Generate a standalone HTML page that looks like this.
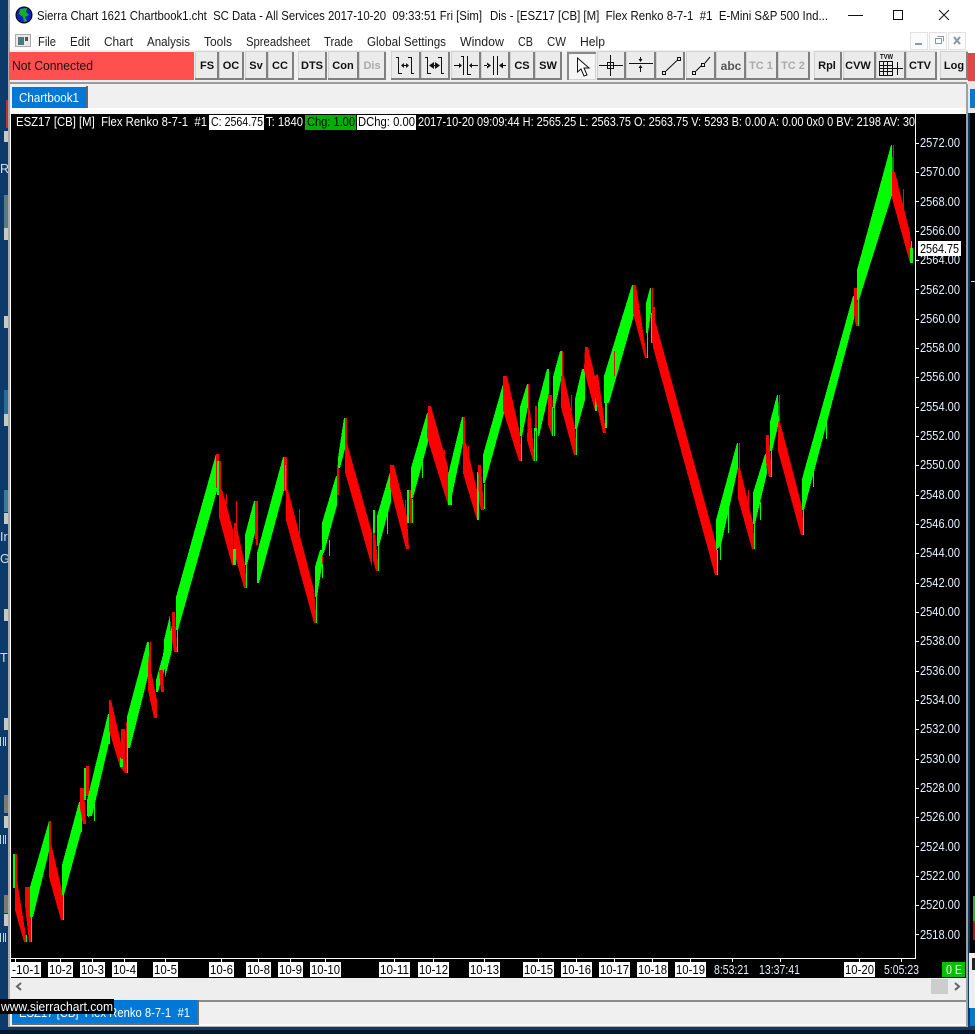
<!DOCTYPE html>
<html><head><meta charset="utf-8"><title>Sierra Chart</title>
<style>
html,body{margin:0;padding:0;background:#0c3a6b;width:975px;height:1034px;overflow:hidden}
svg{display:block;position:absolute;left:0;top:0}
text{font-family:"Liberation Sans",sans-serif;font-size:12.5px;white-space:pre}
.m{fill:#222}
.b{font-weight:bold;font-size:11px;fill:#111;text-anchor:middle}
.d{font-weight:bold;font-size:11px;fill:#aaa;text-anchor:middle}
.a{fill:#e6f0ff;font-size:13px}
.k{fill:#000;font-size:13px}
.w{fill:#fff;font-size:13px}
</style></head><body>
<svg width="975" height="1034" viewBox="0 0 975 1034" xmlns="http://www.w3.org/2000/svg">
<!-- desktop -->
<rect width="975" height="1034" fill="#0c3a6b"/>
<rect x="0" y="1030" width="975" height="4" fill="#06192c"/>
<g fill="#c8c8c8"><rect x="4" y="131" width="4" height="11"/><rect x="4" y="228" width="4" height="12"/><rect x="4" y="316" width="4" height="12"/><rect x="4" y="414" width="4" height="12"/><rect x="4" y="513" width="4" height="11"/><rect x="4" y="609" width="4" height="12"/><rect x="4" y="718" width="4" height="12"/><rect x="4" y="816" width="4" height="12"/><rect x="4" y="914" width="4" height="12"/></g>
<rect x="6" y="100" width="2" height="28" fill="#c03030"/>
<g fill="#5a7a80"><rect x="4" y="195" width="4" height="33"/></g>
<rect x="4" y="390" width="4" height="24" fill="#2a6a9a"/><rect x="4" y="490" width="4" height="22" fill="#3a7a9a"/>
<g fill="#7a7a7a"><rect x="4" y="795" width="4" height="18"/><rect x="4" y="895" width="4" height="18"/></g>
<text x="0" y="173" style="fill:#cfe0ea">R</text><text x="0" y="541" style="fill:#cfe0ea">Ir</text><text x="0" y="563" style="fill:#cfe0ea">Gr</text><text x="0" y="662" style="fill:#cfe0ea">Th</text>
<g fill="#b8dcdc"><rect x="0" y="737" width="1" height="9"/><rect x="3" y="737" width="1" height="9"/><rect x="5" y="737" width="1" height="9"/><rect x="0" y="835" width="1" height="9"/><rect x="3" y="835" width="1" height="9"/><rect x="5" y="835" width="1" height="9"/><rect x="0" y="933" width="1" height="9"/><rect x="3" y="933" width="1" height="9"/><rect x="5" y="933" width="1" height="9"/></g>
<!-- right strip -->
<rect x="967" y="0" width="8" height="53" fill="#fff"/>
<rect x="968" y="53" width="7" height="28" fill="#e04848"/>
<rect x="968" y="81" width="7" height="32" fill="#e8e8e8"/>
<rect x="970" y="89" width="5" height="19" fill="#0078d7"/>
<rect x="970" y="113" width="5" height="840" fill="#000"/>
<rect x="971" y="281" width="4" height="1" fill="#ddd"/>
<rect x="973" y="896" width="2" height="25" fill="#00d000"/><rect x="973" y="921" width="2" height="19" fill="#e00000"/>
<rect x="969" y="953" width="6" height="22" fill="#eee"/><rect x="972" y="958" width="3" height="12" fill="#222"/>
<rect x="969" y="975" width="6" height="33" fill="#eee"/><rect x="970" y="1008" width="5" height="18" fill="#0078d7"/>
<!-- window -->
<rect x="8" y="0" width="960" height="1027" fill="#f0f0f0"/>
<rect x="8" y="0" width="2" height="1027" fill="#a8a8a8"/>
<rect x="966" y="84" width="2" height="943" fill="#a0a0a0"/>
<rect x="10" y="0" width="958" height="50" fill="#fff"/>
<!-- globe -->
<circle cx="24" cy="15" r="8" fill="#1020c8" stroke="#000" stroke-width="1"/>
<path d="M20 9 L27 8 L26 12 L29 15 L25 17 L27 21 L24 22 L23 17 L19 14 Z" fill="#18b020"/>
<text x="37" y="20" textLength="445" lengthAdjust="spacingAndGlyphs" style="fill:#111">Sierra Chart 1621 Chartbook1.cht  SC Data - All Services 2017-10-20  09:33:51 Fri [Sim]</text>
<text x="490" y="20" textLength="338" lengthAdjust="spacingAndGlyphs" style="fill:#111">Dis - [ESZ17 [CB] [M]  Flex Renko 8-7-1  #1  E-Mini S&amp;P 500 Ind...</text>
<!-- window controls -->
<rect x="848" y="15" width="15" height="1" fill="#111"/>
<rect x="893.500" y="10.500" width="9" height="9" fill="none" stroke="#111"/>
<path d="M939 10 L949 20 M949 10 L939 20" stroke="#111" fill="none"/>
<!-- menu -->
<rect x="15.500" y="34.500" width="15" height="12" fill="#e8e8e8" stroke="#aaa"/><rect x="18" y="37" width="6" height="8" fill="#4a7a7a"/><rect x="25" y="37" width="3" height="4" fill="#555"/>
<text class="m" x="38" y="46" textLength="18" lengthAdjust="spacingAndGlyphs">File</text>
<text class="m" x="70" y="46" textLength="20" lengthAdjust="spacingAndGlyphs">Edit</text>
<text class="m" x="104" y="46" textLength="29" lengthAdjust="spacingAndGlyphs">Chart</text>
<text class="m" x="147" y="46" textLength="43" lengthAdjust="spacingAndGlyphs">Analysis</text>
<text class="m" x="204" y="46" textLength="28" lengthAdjust="spacingAndGlyphs">Tools</text>
<text class="m" x="246" y="46" textLength="64" lengthAdjust="spacingAndGlyphs">Spreadsheet</text>
<text class="m" x="324" y="46" textLength="29" lengthAdjust="spacingAndGlyphs">Trade</text>
<text class="m" x="367" y="46" textLength="79" lengthAdjust="spacingAndGlyphs">Global Settings</text>
<text class="m" x="460" y="46" textLength="44" lengthAdjust="spacingAndGlyphs">Window</text>
<text class="m" x="518" y="46" textLength="15" lengthAdjust="spacingAndGlyphs">CB</text>
<text class="m" x="547" y="46" textLength="19" lengthAdjust="spacingAndGlyphs">CW</text>
<text class="m" x="580" y="46" textLength="25" lengthAdjust="spacingAndGlyphs">Help</text>
<!-- mdi -->
<g fill="#fbfbfb" stroke="#e2e2e2"><rect x="910.500" y="32.500" width="17" height="17"/><rect x="929.500" y="32.500" width="17" height="17"/><rect x="948.500" y="32.500" width="17" height="17"/></g>
<rect x="915" y="43" width="7" height="2" fill="#8a97a5"/>
<path d="M935.500 38.500h6v5h-6z M937.500 36.500h6v5" fill="none" stroke="#8a97a5"/>
<path d="M954 37 L960 44 M960 37 L954 44" stroke="#8a97a5" stroke-width="2" fill="none"/>
<!-- toolbar -->
<rect x="10" y="51" width="957" height="31" fill="#f0f0f0"/>
<rect x="9" y="52" width="185" height="28" fill="#ff5050"/>
<text x="12" y="70" textLength="81" lengthAdjust="spacingAndGlyphs" style="fill:#1a1010">Not Connected</text>
<g fill="#ebebeb" stroke="#d2d2d2">
<rect x="195.500" y="51.500" width="23" height="28"/><rect x="219.500" y="51.500" width="24" height="28"/><rect x="245.500" y="51.500" width="22" height="28"/><rect x="268.500" y="51.500" width="25" height="28"/>
<rect x="298.500" y="51.500" width="28" height="28"/><rect x="328.500" y="51.500" width="30" height="28"/><rect x="359.500" y="51.500" width="26" height="28"/>
<rect x="391.500" y="51.500" width="29" height="28"/><rect x="421.500" y="51.500" width="28" height="28"/><rect x="451.500" y="51.500" width="29" height="28"/><rect x="481.500" y="51.500" width="28" height="28"/>
<rect x="510.500" y="51.500" width="24" height="28"/><rect x="535.500" y="51.500" width="26" height="28"/>
<rect x="567.500" y="51.500" width="28" height="28" fill="#f6f6f6"/>
<rect x="597.500" y="51.500" width="28" height="28"/><rect x="626.500" y="51.500" width="29" height="28"/><rect x="656.500" y="51.500" width="28" height="28"/><rect x="686.500" y="51.500" width="29" height="28"/><rect x="716.500" y="51.500" width="29" height="28"/>
<rect x="746.500" y="51.500" width="31" height="28"/><rect x="778.500" y="51.500" width="31" height="28"/>
<rect x="814.500" y="51.500" width="27" height="28"/><rect x="843.500" y="51.500" width="32" height="28"/><rect x="876.500" y="51.500" width="29" height="28"/><rect x="906.500" y="51.500" width="30" height="28"/><rect x="940.500" y="51.500" width="27" height="28"/>
</g>
<path fill="none" stroke="#808080" stroke-width="2" d="M218 52V79H195M243 52V79H219M267 52V79H245M293 52V79H268M326 52V79H298M358 52V79H328M385 52V79H359M420 52V79H391M449 52V79H421M480 52V79H451M509 52V79H481M534 52V79H510M561 52V79H535M625 52V79H597M655 52V79H626M684 52V79H656M715 52V79H686M745 52V79H716M777 52V79H746M809 52V79H778M841 52V79H814M875 52V79H843M905 52V79H876M936 52V79H906M967 52V79H940"/>
<path fill="none" stroke="#8a8a8a" stroke-width="2" d="M568 80V53H596"/>
<text class="b" x="207" y="69">FS</text><text class="b" x="231" y="69">OC</text><text class="b" x="256" y="69">Sv</text><text class="b" x="280" y="69">CC</text>
<text class="b" x="312" y="69">DTS</text><text class="b" x="343" y="69">Con</text><text class="d" x="372" y="69">Dis</text>
<text class="b" x="522" y="69">CS</text><text class="b" x="548" y="69">SW</text>
<text x="731" y="70" text-anchor="middle" style="font-size:12px;font-weight:bold;fill:#555">abc</text>
<text class="d" x="761" y="69">TC 1</text><text class="d" x="793" y="69">TC 2</text>
<text class="b" x="827" y="69">Rpl</text><text class="b" x="858" y="69">CVW</text><text class="b" x="920" y="69">CTV</text><text class="b" x="954" y="69">Log</text>
<!-- toolbar icons -->
<g fill="none" stroke="#111" shape-rendering="crispEdges">
<path d="M398.500 57V74M396 57.500H399M398 73.500H402M411.500 57V74M408 57.500H411M411 73.500H414"/>
<path d="M427.500 57V74M425 57.500H428M427 73.500H431M441.500 57V74M438 57.500H441M441 73.500H444"/>
<path d="M463.500 56V75M467.500 56V75M461 56.500H464M467 74.500H471M454 65.500H460M471 65.500H478"/>
<path d="M493.500 56V75M497.500 56V75"/>
<path d="M599 65.500H623M610.500 55V76"/><rect x="607.500" y="62.500" width="6" height="6"/>
<path d="M629 63.500H653M640.500 57V61M640.500 66V72"/>
<rect x="662.500" y="71.500" width="3" height="3"/><rect x="677.500" y="57.500" width="3" height="3"/>
<rect x="692.500" y="71.500" width="3" height="3"/><rect x="701.500" y="63.500" width="3" height="3"/>
<rect x="879.500" y="61.500" width="13" height="14"/>
<path d="M883.500 61V75M887.500 61V75M879 65.500H892M879 68.500H892M879 71.500H892M892 68.500H903M897.500 62V75"/>
</g>
<g stroke="#111" fill="none"><path d="M666 71 L677 60.500M696 71 L701 66M705 63 L710 57"/></g>
<g fill="#111"><path d="M401 65.500l3-2.500v5zM409 65.500l-3-2.500v5zM404 65h2v1h-2z"/><path d="M429 65.500l5-3.500v7zM440 65.500l-5-3.500v7zM434 65h1v1h-1z"/><path d="M462 65.500l-3-2.500v5zM469 65.500l3-2.500v5z"/><path d="M491 65.500l-4-3v6zM484 65h4v1h-4zM499 65.500l4-3v6zM503 65h3v1h-3z"/><path d="M640.500 62l-2-3h4zM640.500 65l-2 3h4z"/></g>
<path d="M577.500 58V72L581 69L584 76L587 75L584 68L589 68Z" fill="#fff" stroke="#111"/>
<text x="880" y="59" textLength="13" lengthAdjust="spacingAndGlyphs" style="font-size:7px;font-weight:bold;fill:#111">TVW</text>
<!-- tab strip -->
<rect x="10" y="82" width="957" height="2" fill="#9a9a9a"/>
<rect x="10" y="84" width="956" height="24" fill="#f0f0f0"/>
<rect x="10" y="108" width="956" height="2" fill="#fff"/>
<rect x="10" y="110" width="956" height="4" fill="#f8f8f8"/>
<rect x="12" y="87" width="75" height="21" fill="#0078d7"/>
<rect x="86" y="86" width="2" height="22" fill="#5a6a78"/>
<text x="19" y="102" textLength="60" lengthAdjust="spacingAndGlyphs" style="fill:#fff">Chartbook1</text>
<!-- chart -->
<rect x="10" y="113" width="1" height="865" fill="#fff"/>
<rect x="11" y="114" width="955" height="864" fill="#000"/>
<rect x="915" y="114" width="1" height="845" fill="#fff"/>
<rect x="11" y="958" width="905" height="1" fill="#fff"/>
<!-- header -->
<rect x="209" y="115" width="55" height="15" fill="#fff"/>
<rect x="305" y="115" width="51" height="15" fill="#00b000"/>
<rect x="357" y="115" width="59" height="15" fill="#fff"/>
<text x="16" y="126" textLength="191" lengthAdjust="spacingAndGlyphs" class="w">ESZ17 [CB] [M]  Flex Renko 8-7-1  #1</text>
<text x="211" y="126" textLength="52" lengthAdjust="spacingAndGlyphs" class="k">C: 2564.75</text>
<text x="266" y="126" textLength="37" lengthAdjust="spacingAndGlyphs" class="w">T: 1840</text>
<text x="307" y="126" textLength="48" lengthAdjust="spacingAndGlyphs" class="k">Chg: 1.00</text>
<text x="358" y="126" textLength="57" lengthAdjust="spacingAndGlyphs" class="k">DChg: 0.00</text>
<text x="418" y="126" textLength="497" lengthAdjust="spacingAndGlyphs" class="w">2017-10-20 09:09:44 H: 2565.25 L: 2563.75 O: 2563.75 V: 5293 B: 0.00 A: 0.00 0x0 0 BV: 2198 AV: 30</text>
<!-- series -->
<g shape-rendering="crispEdges">
<rect x="13" y="854" width="3" height="34" fill="#0f0"/>
<g fill="#f00"><rect x="15" y="854" width="2" height="30"/><polygon points="15,880 17,880 27,942 24,942 15,910"/><polygon points="25,887 30,887 32,942 29,942 25,905"/></g>
<rect x="26" y="935" width="1" height="7" fill="#0f0"/>
<polygon fill="#0f0" points="30,887 49,821 50,821 50,847 33,917 30,917"/><rect x="31" y="917" width="1" height="25" fill="#0f0"/>
<g fill="#f00"><rect x="49" y="821" width="2" height="25"/><polygon points="49,843 51,843 63,895 63,920 61,920 49,877"/></g>
<rect x="63" y="895" width="1" height="25" fill="#0f0"/>
<polygon fill="#0f0" points="62,865 79,802 81,802 81,832 64,895 62,895"/>
<rect x="80" y="802" width="2" height="30" fill="#0f0"/>
<polygon fill="#f00" points="80,788 84,788 86,824 83,824 80,808"/>
<rect x="84" y="768" width="2" height="32" fill="#0f0"/><rect x="86" y="766" width="3" height="30" fill="#f00"/>
<rect x="94" y="803" width="1" height="18" fill="#0f0"/><rect x="88" y="800" width="1" height="17" fill="#0f0"/>
<polygon fill="#0f0" points="87,800 108,714 109,714 109,743 92,816 88,816 87,816"/>
<rect x="108" y="714" width="2" height="30" fill="#0f0"/>
<polygon fill="#f00" points="109,700 111,700 128,773 125,773 120,767 109,730"/>
<rect x="120" y="758" width="3" height="9" fill="#0f0"/><rect x="121" y="729" width="4" height="30" fill="#f00"/>
<rect x="126" y="722" width="1" height="51" fill="#f00"/>
<polygon fill="#0f0" points="127,717 147,642 149,642 149,672 130,748 127,748"/><rect x="127" y="748" width="1" height="25" fill="#0f0"/>
<polygon fill="#f00" points="148,665 150,642 151,642 151,670 157,700 157,718 154,718 148,690"/>
<polygon fill="#0f0" points="156,680 163,655 165,640 165,668 158,692 156,692"/>
<polygon fill="#f00" points="159,670 163,670 164,692 161,692"/>
<polygon fill="#0f0" points="164,640 170,615 171,640 166,668 164,668"/>
<polygon fill="#0f0" points="165,660 172,625 172,650 165,678"/>
<polygon fill="#f00" points="172,612 175,612 177,652 174,652 172,640"/>
<rect x="177" y="630" width="1" height="22" fill="#0f0"/>
<polygon fill="#0f0" points="176,597 216,454 218,454 218,487 178,630 176,630"/>
<rect x="211" y="490" width="1" height="12" fill="#0f0"/>
<rect x="216" y="454" width="3" height="34" fill="#f00"/>
<rect x="217" y="461" width="2" height="34" fill="#0f0"/><rect x="219" y="461" width="2" height="26" fill="#f00"/>
<polygon fill="#f00" points="219,487 221,487 226,503 233,530 234,565 232,565 219,517"/>
<rect x="226" y="494" width="1" height="10" fill="#f00"/><rect x="236" y="501" width="1" height="30" fill="#f00"/>
<polygon fill="#f00" points="234,523 236,523 245,565 247,588 244,588 234,552"/>
<rect x="233" y="549" width="3" height="16" fill="#0f0"/>
<polygon fill="#0f0" points="245,535 254,501 255,501 255,533 247,565 245,565"/><rect x="246" y="565" width="1" height="23" fill="#0f0"/>
<rect x="255" y="501" width="3" height="38" fill="#f00"/><rect x="256" y="538" width="2" height="7" fill="#f00"/>
<polygon fill="#0f0" points="257,553 283,457 284,457 284,490 259,583 257,583"/>
<rect x="284" y="457" width="3" height="34" fill="#f00"/><rect x="285" y="465" width="1" height="25" fill="#0f0"/>
<rect x="280" y="490" width="1" height="12" fill="#0f0"/>
<polygon fill="#f00" points="286,490 288,490 314,590 317,623 314,623 286,520"/>
<rect x="299" y="509" width="1" height="25" fill="#f00"/>
<rect x="316" y="597" width="1" height="26" fill="#0f0"/>
<polygon fill="#0f0" points="315,567 320,550 322,550 322,566 317,597 315,597"/>
<rect x="322" y="550" width="1" height="28" fill="#0f0"/><rect x="322" y="555" width="1" height="9" fill="#f00"/>
<polygon fill="#0f0" points="322,523 336,476 337,476 337,505 324,553 322,553"/><rect x="329" y="540" width="1" height="16" fill="#0f0"/>
<rect x="337" y="465" width="2" height="30" fill="#f00"/>
<polygon fill="#0f0" points="338,458 344,418 346,418 346,445 340,468 338,468"/>
<rect x="345" y="418" width="2" height="28" fill="#f00"/>
<polygon fill="#f00" points="345,443 347,443 372,533 372,567 345,472"/>
<rect x="373" y="510" width="2" height="32" fill="#0f0"/>
<polygon fill="#f00" points="373,533 375,533 379,571 376,571 373,560"/><rect x="378" y="545" width="1" height="26" fill="#0f0"/>
<polygon fill="#0f0" points="377,516 390,472 391,472 391,502 379,546 377,546"/><rect x="387" y="513" width="1" height="21" fill="#0f0"/>
<polygon fill="#f00" points="390,465 394,465 407,517 409,549 406,549 390,487"/>
<rect x="405" y="500" width="1" height="16" fill="#f00"/>
<rect x="407" y="490" width="2" height="33" fill="#0f0"/><polygon fill="#f00" points="409,490 412,490 413,523 410,523"/><rect x="412" y="499" width="1" height="24" fill="#0f0"/>
<polygon fill="#0f0" points="411,468 427,413 428,413 428,442 413,498 411,498"/><rect x="422" y="462" width="1" height="16" fill="#0f0"/>
<polygon fill="#f00" points="428,406 431,406 448,467 450,505 448,505 427,437"/>
<rect x="444" y="450" width="1" height="17" fill="#f00"/>
<polygon fill="#0f0" points="448,475 462,417 463,417 463,443 450,505 448,505"/><rect x="450" y="490" width="2" height="15" fill="#0f0"/>
<rect x="463" y="417" width="2" height="30" fill="#f00"/>
<polygon fill="#f00" points="463,443 466,443 477,490 477,520 463,473"/><rect x="468" y="446" width="1" height="15" fill="#f00"/>
<rect x="477" y="472" width="2" height="48" fill="#0f0"/>
<polygon fill="#f00" points="478,465 481,465 484,510 481,510 479,500"/><rect x="484" y="484" width="1" height="25" fill="#0f0"/>
<polygon fill="#0f0" points="483,455 503,384 504,384 504,413 485,483 483,483"/>
<polygon fill="#f00" points="503,376 507,376 520,433 522,461 519,461 503,410"/>
<rect x="521" y="436" width="1" height="25" fill="#0f0"/>
<polygon fill="#0f0" points="520,407 527,384 528,384 528,407 522,436 520,436"/>
<rect x="528" y="384" width="1" height="26" fill="#f00"/>
<polygon fill="#f00" points="528,410 530,410 535,461 533,461 527,440"/>
<rect x="535" y="406" width="2" height="25" fill="#f00"/><rect x="534" y="428" width="3" height="33" fill="#0f0"/><rect x="535" y="431" width="1" height="30" fill="#000"/>
<polygon fill="#0f0" points="538,403 547,369 549,369 549,393 539,436 538,436"/>
<polygon fill="#f00" points="548,395 552,395 554,436 552,436 548,424"/><rect x="552" y="407" width="3" height="29" fill="#0f0"/><rect x="553" y="408" width="1" height="28" fill="#000"/>
<polygon fill="#0f0" points="553,377 560,351 562,351 562,376 555,407 553,407"/><rect x="562" y="351" width="1" height="26" fill="#f00"/>
<polygon fill="#f00" points="561,376 564,376 575,428 577,455 574,455 561,407"/><rect x="571" y="395" width="1" height="16" fill="#f00"/>
<rect x="576" y="428" width="1" height="27" fill="#0f0"/>
<polygon fill="#0f0" points="575,399 582,369 585,369 585,400 577,429 575,429"/>
<polygon fill="#f00" points="585,347 588,347 597,385 597,411 595,411 584,370"/>
<rect x="595" y="395" width="2" height="16" fill="#0f0"/>
<polygon fill="#f00" points="595,376 598,374 605,425 606,433 603,433 595,397"/>
<rect x="605" y="400" width="2" height="28" fill="#0f0"/>
<polygon fill="#0f0" points="604,376 632,285 634,285 634,315 609,403 604,403"/>
<rect x="614" y="351" width="1" height="25" fill="#f00"/><rect x="613" y="351" width="1" height="25" fill="#0f0"/>
<polygon fill="#f00" points="633,285 636,285 647,358 645,358 633,313"/><rect x="647" y="333" width="1" height="25" fill="#0f0"/>
<polygon fill="#0f0" points="646,303 650,288 651,288 651,313 648,333 646,333"/>
<rect x="652" y="288" width="1" height="55" fill="#f00"/><rect x="651" y="313" width="1" height="30" fill="#0f0"/>
<polygon fill="#f00" points="653,307 655,307 655,320 717,547 718,575 715,575 653,347"/>
<rect x="717" y="550" width="1" height="25" fill="#0f0"/>
<polygon fill="#0f0" points="716,520 737,443 738,443 738,468 721,545 716,550"/><rect x="720" y="545" width="1" height="15" fill="#0f0"/><rect x="728" y="510" width="1" height="23" fill="#0f0"/>
<rect x="739" y="443" width="1" height="26" fill="#f00"/>
<polygon fill="#f00" points="738,468 740,468 753,523 755,549 752,549 738,498"/><rect x="748" y="490" width="1" height="15" fill="#f00"/>
<rect x="754" y="524" width="1" height="25" fill="#0f0"/>
<polygon fill="#0f0" points="753,493 765,454 766,454 767,473 755,524 753,524"/><rect x="760" y="502" width="1" height="18" fill="#0f0"/>
<polygon fill="#f00" points="766,435 769,435 772,477 769,477 766,462"/><rect x="771" y="451" width="1" height="26" fill="#0f0"/>
<polygon fill="#0f0" points="770,422 777,395 778,395 779,422 772,451 770,451"/>
<rect x="779" y="395" width="1" height="27" fill="#f00"/>
<polygon fill="#f00" points="778,422 780,422 802,507 804,535 801,535 778,451"/>
<rect x="803" y="510" width="1" height="25" fill="#0f0"/>
<polygon fill="#0f0" points="802,479 853,296 854,296 854,319 804,510 802,510"/><rect x="826" y="423" width="1" height="16" fill="#0f0"/><rect x="813" y="472" width="1" height="15" fill="#0f0"/>
<polygon fill="#f00" points="854,288 857,288 859,326 856,326 854,315"/><rect x="858" y="300" width="1" height="26" fill="#0f0"/>
<polygon fill="#0f0" points="857,270 891,145 892,145 893,192 859,300 857,300"/>
<rect x="893" y="145" width="1" height="27" fill="#f00"/>
<polygon fill="#f00" points="892,172 895,172 910,233 912,263 910,263 892,198"/><rect x="903" y="189" width="1" height="20" fill="#f00"/>
<rect x="910" y="248" width="3" height="15" fill="#0f0"/><rect x="911" y="241" width="1" height="8" fill="#0f0"/>
</g>
<!-- price ticks -->
<g fill="#fff"><rect x="915" y="143" width="4" height="1"/><rect x="915" y="172" width="4" height="1"/><rect x="915" y="201" width="4" height="1"/><rect x="915" y="231" width="4" height="1"/><rect x="915" y="260" width="4" height="1"/><rect x="915" y="289" width="4" height="1"/><rect x="915" y="319" width="4" height="1"/><rect x="915" y="348" width="4" height="1"/><rect x="915" y="377" width="4" height="1"/><rect x="915" y="407" width="4" height="1"/><rect x="915" y="436" width="4" height="1"/><rect x="915" y="465" width="4" height="1"/><rect x="915" y="495" width="4" height="1"/><rect x="915" y="524" width="4" height="1"/><rect x="915" y="553" width="4" height="1"/><rect x="915" y="583" width="4" height="1"/><rect x="915" y="612" width="4" height="1"/><rect x="915" y="641" width="4" height="1"/><rect x="915" y="671" width="4" height="1"/><rect x="915" y="700" width="4" height="1"/><rect x="915" y="729" width="4" height="1"/><rect x="915" y="759" width="4" height="1"/><rect x="915" y="788" width="4" height="1"/><rect x="915" y="817" width="4" height="1"/><rect x="915" y="846" width="4" height="1"/><rect x="915" y="876" width="4" height="1"/><rect x="915" y="905" width="4" height="1"/><rect x="915" y="934" width="4" height="1"/></g>
<g>
<text class="a" x="920" y="147" textLength="40" lengthAdjust="spacingAndGlyphs">2572.00</text>
<text class="a" x="920" y="176" textLength="40" lengthAdjust="spacingAndGlyphs">2570.00</text>
<text class="a" x="920" y="206" textLength="40" lengthAdjust="spacingAndGlyphs">2568.00</text>
<text class="a" x="920" y="235" textLength="40" lengthAdjust="spacingAndGlyphs">2566.00</text>
<text class="a" x="920" y="264" textLength="40" lengthAdjust="spacingAndGlyphs">2564.00</text>
<text class="a" x="920" y="294" textLength="40" lengthAdjust="spacingAndGlyphs">2562.00</text>
<text class="a" x="920" y="323" textLength="40" lengthAdjust="spacingAndGlyphs">2560.00</text>
<text class="a" x="920" y="352" textLength="40" lengthAdjust="spacingAndGlyphs">2558.00</text>
<text class="a" x="920" y="381" textLength="40" lengthAdjust="spacingAndGlyphs">2556.00</text>
<text class="a" x="920" y="411" textLength="40" lengthAdjust="spacingAndGlyphs">2554.00</text>
<text class="a" x="920" y="440" textLength="40" lengthAdjust="spacingAndGlyphs">2552.00</text>
<text class="a" x="920" y="469" textLength="40" lengthAdjust="spacingAndGlyphs">2550.00</text>
<text class="a" x="920" y="499" textLength="40" lengthAdjust="spacingAndGlyphs">2548.00</text>
<text class="a" x="920" y="528" textLength="40" lengthAdjust="spacingAndGlyphs">2546.00</text>
<text class="a" x="920" y="557" textLength="40" lengthAdjust="spacingAndGlyphs">2544.00</text>
<text class="a" x="920" y="587" textLength="40" lengthAdjust="spacingAndGlyphs">2542.00</text>
<text class="a" x="920" y="616" textLength="40" lengthAdjust="spacingAndGlyphs">2540.00</text>
<text class="a" x="920" y="645" textLength="40" lengthAdjust="spacingAndGlyphs">2538.00</text>
<text class="a" x="920" y="675" textLength="40" lengthAdjust="spacingAndGlyphs">2536.00</text>
<text class="a" x="920" y="704" textLength="40" lengthAdjust="spacingAndGlyphs">2534.00</text>
<text class="a" x="920" y="733" textLength="40" lengthAdjust="spacingAndGlyphs">2532.00</text>
<text class="a" x="920" y="763" textLength="40" lengthAdjust="spacingAndGlyphs">2530.00</text>
<text class="a" x="920" y="792" textLength="40" lengthAdjust="spacingAndGlyphs">2528.00</text>
<text class="a" x="920" y="821" textLength="40" lengthAdjust="spacingAndGlyphs">2526.00</text>
<text class="a" x="920" y="851" textLength="40" lengthAdjust="spacingAndGlyphs">2524.00</text>
<text class="a" x="920" y="880" textLength="40" lengthAdjust="spacingAndGlyphs">2522.00</text>
<text class="a" x="920" y="909" textLength="40" lengthAdjust="spacingAndGlyphs">2520.00</text>
<text class="a" x="920" y="939" textLength="40" lengthAdjust="spacingAndGlyphs">2518.00</text>
</g>
<rect x="918" y="241" width="43" height="15" fill="#fff"/>
<text class="k" x="920" y="253" textLength="39" lengthAdjust="spacingAndGlyphs">2564.75</text>
<!-- time ticks -->
<g fill="#fff"><rect x="15" y="958" width="1" height="4"/><rect x="60" y="958" width="1" height="4"/><rect x="92" y="958" width="1" height="4"/><rect x="124" y="958" width="1" height="4"/><rect x="165" y="958" width="1" height="4"/><rect x="221" y="958" width="1" height="4"/><rect x="258" y="958" width="1" height="4"/><rect x="290" y="958" width="1" height="4"/><rect x="325" y="958" width="1" height="4"/><rect x="394" y="958" width="1" height="4"/><rect x="433" y="958" width="1" height="4"/><rect x="484" y="958" width="1" height="4"/><rect x="538" y="958" width="1" height="4"/><rect x="576" y="958" width="1" height="4"/><rect x="614" y="958" width="1" height="4"/><rect x="652" y="958" width="1" height="4"/><rect x="690" y="958" width="1" height="4"/><rect x="732" y="958" width="1" height="4"/><rect x="780" y="958" width="1" height="4"/><rect x="859" y="958" width="1" height="4"/><rect x="901" y="958" width="1" height="4"/>
<rect x="11" y="962" width="30" height="15"/><rect x="48" y="962" width="25" height="15"/><rect x="80" y="962" width="25" height="15"/><rect x="112" y="962" width="25" height="15"/><rect x="153" y="962" width="25" height="15"/><rect x="209" y="962" width="25" height="15"/><rect x="246" y="962" width="25" height="15"/><rect x="278" y="962" width="25" height="15"/><rect x="310" y="962" width="31" height="15"/><rect x="379" y="962" width="31" height="15"/><rect x="418" y="962" width="31" height="15"/><rect x="469" y="962" width="31" height="15"/><rect x="523" y="962" width="31" height="15"/><rect x="561" y="962" width="31" height="15"/><rect x="599" y="962" width="31" height="15"/><rect x="637" y="962" width="31" height="15"/><rect x="675" y="962" width="31" height="15"/><rect x="844" y="962" width="31" height="15"/></g>
<g>
<text class="k" x="12" y="974" textLength="28" lengthAdjust="spacingAndGlyphs">-10-1</text>
<text class="k" x="49" y="974" textLength="23" lengthAdjust="spacingAndGlyphs">10-2</text>
<text class="k" x="81" y="974" textLength="23" lengthAdjust="spacingAndGlyphs">10-3</text>
<text class="k" x="113" y="974" textLength="23" lengthAdjust="spacingAndGlyphs">10-4</text>
<text class="k" x="154" y="974" textLength="23" lengthAdjust="spacingAndGlyphs">10-5</text>
<text class="k" x="210" y="974" textLength="23" lengthAdjust="spacingAndGlyphs">10-6</text>
<text class="k" x="247" y="974" textLength="23" lengthAdjust="spacingAndGlyphs">10-8</text>
<text class="k" x="279" y="974" textLength="23" lengthAdjust="spacingAndGlyphs">10-9</text>
<text class="k" x="311" y="974" textLength="29" lengthAdjust="spacingAndGlyphs">10-10</text>
<text class="k" x="380" y="974" textLength="29" lengthAdjust="spacingAndGlyphs">10-11</text>
<text class="k" x="419" y="974" textLength="29" lengthAdjust="spacingAndGlyphs">10-12</text>
<text class="k" x="470" y="974" textLength="29" lengthAdjust="spacingAndGlyphs">10-13</text>
<text class="k" x="524" y="974" textLength="29" lengthAdjust="spacingAndGlyphs">10-15</text>
<text class="k" x="562" y="974" textLength="29" lengthAdjust="spacingAndGlyphs">10-16</text>
<text class="k" x="600" y="974" textLength="29" lengthAdjust="spacingAndGlyphs">10-17</text>
<text class="k" x="638" y="974" textLength="29" lengthAdjust="spacingAndGlyphs">10-18</text>
<text class="k" x="676" y="974" textLength="29" lengthAdjust="spacingAndGlyphs">10-19</text>
<text class="a" x="714" y="974" textLength="35" lengthAdjust="spacingAndGlyphs">8:53:21</text>
<text class="a" x="759" y="974" textLength="41" lengthAdjust="spacingAndGlyphs">13:37:41</text>
<text class="k" x="845" y="974" textLength="29" lengthAdjust="spacingAndGlyphs">10-20</text>
<text class="a" x="884" y="974" textLength="35" lengthAdjust="spacingAndGlyphs">5:05:23</text>
</g>
<rect x="942" y="962" width="23" height="15" fill="#00c000"/>
<text class="w" x="946" y="974" textLength="16" lengthAdjust="spacingAndGlyphs">0 E</text>
<!-- scrollbar -->
<rect x="11" y="978" width="955" height="22" fill="#eeeeee"/>
<path d="M21 983 L17 986.500 L21 990" fill="none" stroke="#666" stroke-width="2"/>
<rect x="931" y="979" width="17" height="15" fill="#cdcdcd"/>
<path d="M955 983 L959 986.500 L955 990" fill="none" stroke="#666" stroke-width="2"/>
<rect x="11" y="1000" width="955" height="2" fill="#8a8a8a"/>
<rect x="11" y="1002" width="955" height="22" fill="#f0f0f0"/>
<rect x="10" y="1024" width="956" height="3" fill="#fafafa"/>
<rect x="10" y="1026" width="958" height="1" fill="#b0b0b0"/>
<!-- bottom tab -->
<rect x="12" y="1000" width="185" height="23" fill="#0078d7"/>
<rect x="197" y="1000" width="2" height="25" fill="#6a6a6a"/><rect x="12" y="1023" width="187" height="2" fill="#6a6a6a"/>
<text class="w" x="19" y="1017" textLength="171" lengthAdjust="spacingAndGlyphs">ESZ17 [CB]  Flex Renko 8-7-1  #1</text>
<!-- tooltip -->
<rect x="0" y="999" width="114" height="15" fill="#000"/>
<text class="w" x="1" y="1011" textLength="112" lengthAdjust="spacingAndGlyphs">www.sierrachart.com</text>
</svg>
</body></html>
